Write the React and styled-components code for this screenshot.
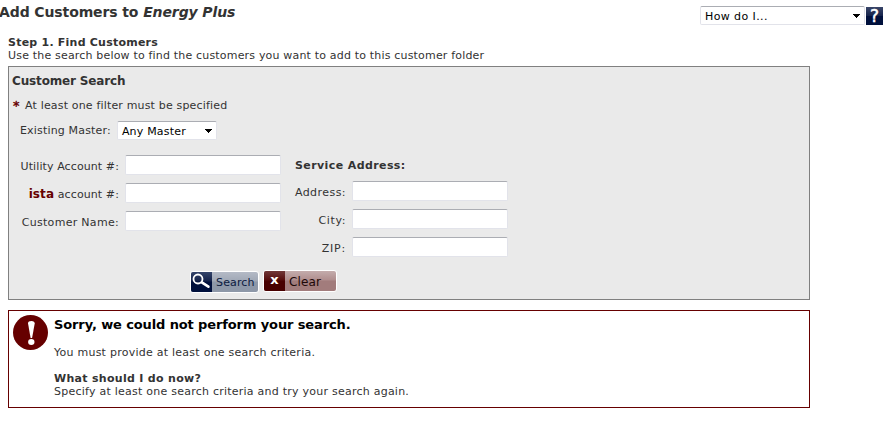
import React from "react";
import styled, { createGlobalStyle } from "styled-components";

const Global = createGlobalStyle`
  * { box-sizing: border-box; }
  body {
    margin: 0;
    background: #fff;
    color: #333;
    font: 11px/13px Verdana, "DejaVu Sans", sans-serif;
    overflow: hidden;
  }
  input, select, button { font: inherit; }
`;

const Page = styled.main`
  width: 888px;
  height: 437px;
`;
const Header = styled.header`
  display: flex;
  justify-content: space-between;
  align-items: flex-start;
  height: 36px;
  padding: 3px 5px 0 0;
`;
const Title = styled.h1`
  margin: 0 0 0 -1px;
  font-size: 14px;
  line-height: 18px;
  letter-spacing: -0.11px;
  white-space: nowrap;
`;
const Help = styled.div`
  display: flex;
  gap: 1px;
  padding-top: 3px;
`;
const Select = styled.button`
  display: flex;
  align-items: center;
  justify-content: space-between;
  width: ${(p) => p.$width}px;
  height: 19px;
  padding: 1px 3px 0 4px;
  border: 1px solid #e2e3ea;
  border-top-color: #abadb3;
  border-radius: 2px;
  background: #fff;
  color: #000;
  letter-spacing: ${(p) => p.$spacing || 0}px;
  white-space: nowrap;
`;
const HelpButton = styled.button`
  width: 17px;
  height: 18px;
  margin-top: 1px;
  padding: 0;
  border: 0;
  background: linear-gradient(#3a4669, #14224a 50%, #00103c 50%);
  color: #fff;
  font-size: 17px;
  -webkit-text-stroke: 0.5px #fff;
  line-height: 18px;
`;
const Content = styled.div`
  width: 802px;
  margin-left: 8px;
`;
const Line = styled.div`
  height: 13px;
  letter-spacing: ${(p) => p.$spacing || 0}px;
  white-space: nowrap;
`;
const Strong = styled(Line)`
  font-weight: bold;
`;
const Panel = styled.section`
  height: 234px;
  margin-top: 4px;
  padding: 6px 3px 0;
  border: 1px solid #808080;
  background: #eaeaea;
`;
const PanelTitle = styled.h2`
  margin: 0;
  font-size: 12px;
  line-height: 16px;
  letter-spacing: -0.15px;
`;
const Note = styled.div`
  display: flex;
  gap: 5px;
  margin-top: 10px;
`;
const Asterisk = styled.span`
  width: 7px;
  margin-left: 1px;
  color: #600;
  font-size: 13px;
  -webkit-text-stroke: 0.4px #600;
`;
const MasterRow = styled.div`
  display: flex;
  align-items: center;
  gap: 6px;
  height: 19px;
  margin: 9px 0 0 8px;
`;
const Columns = styled.div`
  display: flex;
  height: 104px;
  margin-top: 15px;
`;
const Accounts = styled.div`
  display: grid;
  grid-auto-rows: 20px;
  row-gap: 8px;
  width: 269px;
  align-content: start;
`;
const Address = styled.div`
  display: grid;
  grid-template-rows: 18px;
  grid-auto-rows: 20px;
  row-gap: 8px;
  width: 227px;
  align-content: start;
`;
const AddressTitle = styled(Strong)`
  height: 18px;
  padding-top: 4px;
  margin: 0 0 0 14px;
`;
const Field = styled.label`
  display: flex;
  justify-content: flex-end;
  gap: 6px;
`;
const FieldName = styled.span`
  padding-top: 5px;
  letter-spacing: ${(p) => p.$spacing || 0}px;
  white-space: nowrap;
`;
const Brand = styled.b`
  color: #600;
  font-size: 12px;
`;
const Input = styled.input`
  flex: none;
  width: 156px;
  height: 20px;
  border: 1px solid #e2e3ea;
  border-top-color: #abadb3;
  border-radius: 2px;
  background: #fff;
`;
const Actions = styled.div`
  display: flex;
  align-items: flex-start;
  gap: 4px;
  margin: 11px 0 0 178px;
`;
const Action = styled.button`
  display: flex;
  width: ${(p) => p.$width}px;
  height: 22px;
  margin-top: ${(p) => p.$top || 0}px;
  padding: 0;
  overflow: hidden;
  border: 1px solid #fff;
  border-radius: 3px;
  background: ${(p) => p.$fill};
  color: ${(p) => p.$ink};
  font-size: ${(p) => p.$size}px;
  line-height: ${(p) => p.$line}px;
  letter-spacing: 0.15px;
`;
const ActionIcon = styled.span`
  flex: none;
  width: 21px;
  height: 100%;
  margin-right: 4px;
  background: ${(p) => p.$fill};
  color: #fff;
  font-size: 13px;
  font-weight: bold;
  line-height: 18px;
`;
const Alert = styled.section`
  display: flex;
  gap: 6px;
  height: 98px;
  margin-top: 10px;
  padding: 4px;
  border: 1px solid #600;
`;
const AlertTitle = styled.h2`
  margin: 1px 0 12px;
  font-size: 13px;
  line-height: 18px;
  color: #000;
  letter-spacing: -0.12px;
`;
const Message = styled(Line)`
  margin-bottom: 13px;
`;

const Arrow = () => (
  <svg width="8" height="5" viewBox="0 0 8 5" shapeRendering="crispEdges">
    <path d="M0 0h7v1H6v1H5v1H4v1H3V3H2V2H1V1H0z" fill="#000" />
  </svg>
);
const Magnifier = () => (
  <svg width="21" height="19" viewBox="0 0 21 19" fill="none" stroke="#fff">
    <circle cx="7" cy="7" r="4.5" strokeWidth="1.8" />
    <path d="M10.8 10.3l6.6 4.4" strokeWidth="2.6" strokeLinecap="round" />
  </svg>
);
const Exclamation = () => (
  <svg width="35" height="35" viewBox="0 0 35 35">
    <circle cx="17.5" cy="17.5" r="17.5" fill="#600" />
    <path d="M15 8.2Q15.2 6 18.4 6Q21.7 6 21.7 8.5L19.1 23h-1.5Z" fill="#fff" />
    <ellipse cx="18.3" cy="27" rx="3.2" ry="3" fill="#fff" />
  </svg>
);

export default function App() {
  return (
    <Page>
      <Global />
      <Header>
        <Title>Add Customers to <em>Energy Plus</em></Title>
        <Help>
          <Select $width={165} $spacing={0.4}>How do I... <Arrow /></Select>
          <HelpButton>?</HelpButton>
        </Help>
      </Header>
      <Content>
        <Strong $spacing={0.23}>Step 1. Find Customers</Strong>
        <Line $spacing={0.18}>Use the search below to find the customers you want to add to this customer folder</Line>
        <Panel>
          <PanelTitle>Customer Search</PanelTitle>
          <Note><Asterisk>*</Asterisk><Line $spacing={0.17}>At least one filter must be specified</Line></Note>
          <MasterRow>
            <Line $spacing={0.17}>Existing Master:</Line>
            <Select $width={100} $spacing={0.2}>Any Master <Arrow /></Select>
          </MasterRow>
          <Columns>
            <Accounts>
              <Field><FieldName $spacing={0.1}>Utility Account #:</FieldName><Input /></Field>
              <Field><FieldName $spacing={0.1}><Brand>ista</Brand> account #:</FieldName><Input /></Field>
              <Field><FieldName $spacing={0.3}>Customer Name:</FieldName><Input /></Field>
            </Accounts>
            <Address>
              <AddressTitle $spacing={0.4}>Service Address:</AddressTitle>
              <Field><FieldName $spacing={0.45}>Address:</FieldName><Input /></Field>
              <Field><FieldName $spacing={0.6}>City:</FieldName><Input /></Field>
              <Field><FieldName $spacing={0.8}>ZIP:</FieldName><Input /></Field>
            </Address>
          </Columns>
          <Actions>
            <Action $width={69} $line={21} $top={1} $size={11} $ink="#0c1b40" $fill="linear-gradient(#b4bac6, #a0a8b6 45%, #8e98a8 50%)">
              <ActionIcon $fill="linear-gradient(#35456b, #14224a 45%, #00103c 50%)"><Magnifier /></ActionIcon>Search
            </Action>
            <Action $width={74} $line={22} $size={12} $ink="#1d0808" $fill="linear-gradient(#c4acac, #b08e8e 45%, #a27c7c 50%)">
              <ActionIcon $fill="linear-gradient(#713838, #560d0d 45%, #480000 50%)">x</ActionIcon>Clear
            </Action>
          </Actions>
        </Panel>
        <Alert>
          <Exclamation />
          <div>
            <AlertTitle>Sorry, we could not perform your search.</AlertTitle>
            <Message $spacing={0.25}>You must provide at least one search criteria.</Message>
            <Strong $spacing={0.3}>What should I do now?</Strong>
            <Line $spacing={0.24}>Specify at least one search criteria and try your search again.</Line>
          </div>
        </Alert>
      </Content>
    </Page>
  );
}
